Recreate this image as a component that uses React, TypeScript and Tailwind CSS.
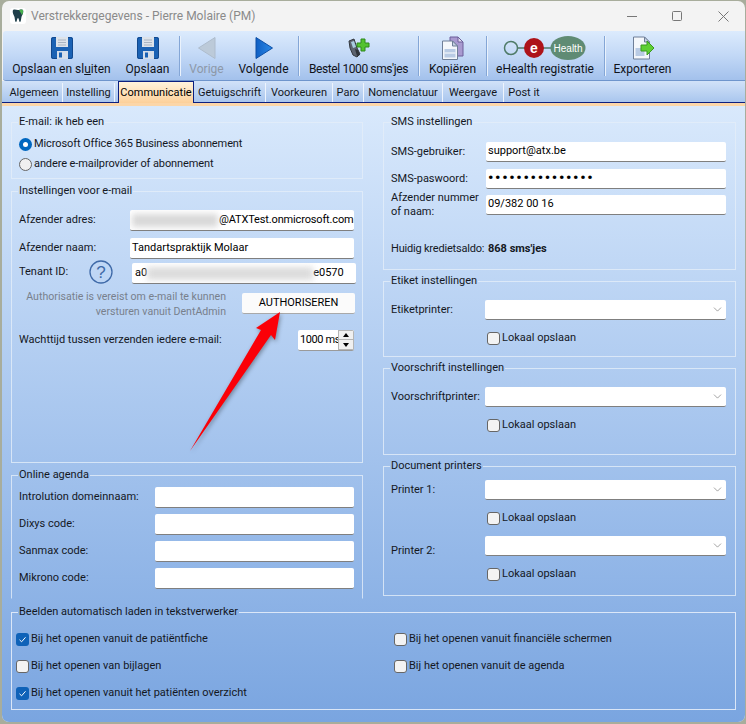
import React from 'react';
import { ChevronDown } from 'lucide-react';

function Floppy() {
  return (
    <svg width="22" height="22" viewBox="0 0 22 22">
      <rect x="0" y="0" width="22" height="22" rx="2" fill="#1b62b4" />
      <rect x="0.5" y="0.5" width="21" height="21" rx="2" fill="none" stroke="#12488c" />
      <rect x="5" y="0" width="12" height="10" fill="#dde3ea" />
      <path d="M7 3h8M7 5.5h8M7 8h8" stroke="#a9b4c2" strokeWidth="1" />
      <rect x="6" y="14" width="11" height="8" fill="#d5deea" />
      <rect x="8" y="15.5" width="3" height="5" fill="#1b62b4" />
    </svg>
  );
}

function ArrowLeftIcon() {
  return (
    <svg width="20" height="24" viewBox="0 0 20 24">
      <path d="M18 1.5V22.5L1.5 12Z" fill="#bccad9" stroke="#aebccc" strokeLinejoin="round" />
    </svg>
  );
}

function ArrowRightIcon() {
  return (
    <svg width="20" height="24" viewBox="0 0 20 24">
      <defs>
        <linearGradient id="nx" x1="0" y1="0" x2="1" y2="0">
          <stop offset="0" stopColor="#0f5fc4" />
          <stop offset="1" stopColor="#2b8ae8" />
        </linearGradient>
      </defs>
      <path d="M2 1.5V22.5L18.5 12Z" fill="url(#nx)" stroke="#0d4fa6" strokeLinejoin="round" />
    </svg>
  );
}

function PhoneIcon() {
  return (
    <svg width="24" height="24" viewBox="0 0 24 24">
      <path d="M2 5l5-2 2 6 1 3 3 6-3 3-4-2-3-7Z" fill="#5d6470" stroke="#33383f" />
      <path d="M4 6l3-1 2 6-3 1Z" fill="#a9cbe0" />
      <path d="M8 13l3 1 2 5-3 1Z" fill="#2f3339" />
      <path d="M14 3h4v4h4v4h-4v4h-4v-4h-4V7h4Z" fill="#53c22f" stroke="#2f8a1c" />
    </svg>
  );
}

function CopyIcon() {
  return (
    <svg width="24" height="24" viewBox="0 0 24 24">
      <path d="M9 1h8l5 5v14H9Z" fill="#a99ad0" stroke="#6d5f9a" />
      <path d="M17 1v5h5Z" fill="#e3ddf0" stroke="#6d5f9a" />
      <path d="M1.5 5h10l5 5v13.500h-15Z" fill="#f4f7fb" stroke="#6f7f98" />
      <path d="M11.500 5v5h5Z" fill="#c7d2e3" stroke="#6f7f98" />
      <rect x="3.500" y="13" width="11" height="8.500" fill="#b9cbe4" />
      <path d="M3.500 17h11" stroke="#fff" />
    </svg>
  );
}

function EHealthIcon() {
  return (
    <svg width="84" height="26" viewBox="0 0 84 26">
      <path d="M14 13h10M40 13h10" stroke="#4f7b68" strokeWidth="1.500" />
      <circle cx="8" cy="13" r="6.500" fill="none" stroke="#4f7b68" strokeWidth="1.500" />
      <circle cx="31" cy="13" r="10" fill="#ad1319" />
      <text x="31" y="17.500" fontSize="14" fontWeight="700" fill="#fff" textAnchor="middle" fontFamily="Liberation Sans, sans-serif">e</text>
      <ellipse cx="65" cy="13" rx="17.500" ry="12" fill="#5f8b74" />
      <text x="65" y="16.500" fontSize="10" fill="#fff" textAnchor="middle" fontFamily="Liberation Sans, sans-serif">Health</text>
    </svg>
  );
}

function ExportIcon() {
  return (
    <svg width="22" height="24" viewBox="0 0 22 24">
      <path d="M1.500 1h11l5 5v17h-16Z" fill="#f4f7fb" stroke="#6f7f98" />
      <path d="M12.500 1v5h5Z" fill="#c7d2e3" stroke="#6f7f98" />
      <rect x="3.500" y="12" width="9" height="8" fill="#b9cbe4" />
      <path d="M9 9h6V5l7 7-7 7v-4H9Z" fill="#5fcf34" stroke="#3a9a1e" />
    </svg>
  );
}

function ToolSep({ className }: { className: string }) {
  return <div className={`h-[40px] w-[2px] shrink-0 border-l border-[#84a6d6] bg-[#eaf2fc] ${className}`} />;
}

function ToolButton({ className, icon, disabled, children }: { className: string; icon: React.ReactNode; disabled?: boolean; children: React.ReactNode }) {
  return (
    <div className={`flex shrink-0 flex-col items-center ${className}`}>
      <div className="flex h-[24px] items-center justify-center">{icon}</div>
      <div className={`mt-[1px] whitespace-nowrap text-[12px] leading-[16px] ${disabled ? 'text-[#8d98a8]' : 'text-[#10131a]'}`}>{children}</div>
    </div>
  );
}

const tabs = [
  { label: 'Algemeen', w: 'w-[57px]' },
  { label: 'Instelling', w: 'w-[52px]' },
  { label: 'Communicatie', w: 'w-[76px] ml-[3px]', active: true },
  { label: 'Getuigschrift', w: 'w-[72px]' },
  { label: 'Voorkeuren', w: 'w-[67px]' },
  { label: 'Paro', w: 'w-[31px]' },
  { label: 'Nomenclatuur', w: 'w-[79px]' },
  { label: 'Weergave', w: 'w-[61px]' },
  { label: 'Post it', w: 'w-[40px]' },
];

function Group({ title, className, children }: { title: string; className: string; children: React.ReactNode }) {
  return (
    <fieldset className={`min-w-0 border border-[#e4edf9]/80 px-[7px] ${className}`}>
      <legend className="-ml-[1px] h-[16px] px-[1px] leading-[16px]">{title}</legend>
      {children}
    </fieldset>
  );
}

function TextBox({ className, children }: { className: string; children?: React.ReactNode }) {
  return (
    <div className={`flex shrink-0 items-center overflow-hidden whitespace-nowrap rounded-[2px] border-b border-[#7f7f7f] bg-white px-[2px] ${className}`}>
      {children}
    </div>
  );
}

function Combo() {
  return (
    <div className="flex h-[20px] w-[241px] shrink-0 items-center justify-end rounded-[2px] border-b border-[#7f7f7f] bg-white pr-[2px]">
      <ChevronDown size={13} strokeWidth={1} className="text-[#555]" />
    </div>
  );
}

function Check({ checked, label, className }: { checked?: boolean; label: string; className?: string }) {
  return (
    <div className={`flex h-[16px] items-center gap-[2px] whitespace-nowrap ${className ?? ''}`}>
      {checked ? (
        <div className="flex h-[13px] w-[13px] items-center justify-center rounded-[3px] bg-[#0f62b8]">
          <svg width="9" height="9" viewBox="0 0 9 9">
            <path d="M1.500 4.800 3.600 6.800 7.500 2.300" fill="none" stroke="#fff" strokeWidth="1" />
          </svg>
        </div>
      ) : (
        <div className="h-[13px] w-[13px] rounded-[3px] border border-[#666] bg-[#f3f3f3]" />
      )}
      <span>{label}</span>
    </div>
  );
}

function Radio({ checked, label }: { checked?: boolean; label: string }) {
  return (
    <div className="flex h-[20px] items-center gap-[2px]">
      {checked ? (
        <div className="flex h-[13px] w-[13px] items-center justify-center rounded-full bg-[#0067c0]">
          <div className="h-[5px] w-[5px] rounded-full bg-white" />
        </div>
      ) : (
        <div className="h-[13px] w-[13px] rounded-full border border-[#666] bg-[#f0f0f0]" />
      )}
      <span className="tracking-[-0.1px]">{label}</span>
    </div>
  );
}

function AgendaRow({ label, className }: { label: string; className?: string }) {
  return (
    <div className={`flex items-center ${className ?? ''}`}>
      <span className="w-[136px] shrink-0">{label}</span>
      <TextBox className="h-[21px] w-[199px]" />
    </div>
  );
}

function SmsRow({ label, className, children }: { label: React.ReactNode; className?: string; children?: React.ReactNode }) {
  return (
    <div className={`flex h-[20px] items-center ${className ?? ''}`}>
      <span className="w-[95px] shrink-0 leading-[14px]">{label}</span>
      <TextBox className="h-[20px] w-[240px] text-black">{children}</TextBox>
    </div>
  );
}

export default function App() {
  return (
    <div className="relative h-[724px] w-[746px] overflow-hidden bg-[#a8ad9c] font-['Roboto',sans-serif] text-[11px] text-[#14181f]">
      <div className="ml-[2px] mt-[1px] flex h-[721px] w-[743px] flex-col overflow-hidden rounded-[7px] bg-[#f3f3f3]">
        {/* title bar */}
        <div className="flex h-[30px] shrink-0 items-center">
          <div className="ml-[8px] flex h-[16px] w-[16px] items-center justify-center rounded-[3px] bg-white">
            <svg width="12" height="14" viewBox="0 0 12 14">
              <path d="M1 1c2-1 3 0 5 0s3-1 5 0c1 3-1 5-1.500 7S9 13 8 13 7 9 6 9s-1 4-2 4-1-3-1.500-5S0 4 1 1Z" fill="#1f3f4a" />
              <path d="M7 1c2-1 3-.5 4 0 .5 2-.5 4-1 5Z" fill="#49b050" />
            </svg>
          </div>
          <span className="ml-[5px] text-[12px] text-[#8a8a8a]">Verstrekkergegevens - Pierre Molaire (PM)</span>
          <div className="ml-auto flex items-center">
            <svg width="11" height="11" viewBox="0 0 11 11" className="mr-[34px]">
              <path d="M0 5.500h10" stroke="#777" />
            </svg>
            <svg width="11" height="11" viewBox="0 0 11 11" className="mr-[35px]">
              <rect x="0.500" y="0.500" width="9" height="9" rx="1" fill="none" stroke="#777" />
            </svg>
            <svg width="11" height="11" viewBox="0 0 11 11" className="mr-[16px]">
              <path d="M0.500 0.500l10 10M10.500 0.500l-10 10" stroke="#777" />
            </svg>
          </div>
        </div>

        {/* toolbar */}
        <div className="ml-[1px] flex h-[50px] shrink-0 items-start rounded-l-[3px] border-b border-[#6f95cc] bg-gradient-to-b from-[#dcebfd] via-[#c2d8f6] to-[#a3c1ec] pt-[5px]">
          <ToolButton className="ml-[10px] w-[97px]" icon={<Floppy />}>
            Opslaan en sl<u>u</u>iten
          </ToolButton>
          <ToolButton className="ml-[16px] w-[43px]" icon={<Floppy />}>Opslaan</ToolButton>
          <ToolSep className="ml-[10px]" />
          <ToolButton className="ml-[9px] w-[33px]" disabled icon={<ArrowLeftIcon />}>Vorige</ToolButton>
          <ToolButton className="ml-[16px] w-[49px]" icon={<ArrowRightIcon />}>Volgende</ToolButton>
          <ToolSep className="ml-[10px]" />
          <ToolButton className="ml-[9px] w-[99px]" icon={<PhoneIcon />}>
            <span className="tracking-[-0.4px]">Bestel 1000 sms'jes</span>
          </ToolButton>
          <ToolSep className="ml-[10px]" />
          <ToolButton className="ml-[9px] w-[47px]" icon={<CopyIcon />}>Kopiëren</ToolButton>
          <ToolSep className="ml-[10px]" />
          <ToolButton className="ml-[9px] w-[96px]" icon={<EHealthIcon />}>eHealth registratie</ToolButton>
          <ToolSep className="ml-[11px]" />
          <ToolButton className="ml-[8px] w-[57px]" icon={<ExportIcon />}>Exporteren</ToolButton>
        </div>

        {/* tabs */}
        <div className="flex h-[22px] shrink-0 items-end border-b border-[#0b1f80] bg-gradient-to-b from-[#d2e2f8] to-[#a9c6ee] pl-[4px]">
          {tabs.map((t) =>
            t.active ? (
              <div key={t.label} className={`${t.w} -mb-[1px] flex h-[22px] shrink-0 items-center justify-center border-x border-t border-[#0b1f80] bg-gradient-to-b from-[#fff3dc] to-[#fdd09a] pt-[1px] text-black`}>
                {t.label}
              </div>
            ) : (
              <div key={t.label} className={`${t.w} flex h-[19px] shrink-0 items-center justify-center border-r border-[#eef4fd] pt-[1px] last:border-r-0`}>
                {t.label}
              </div>
            )
          )}
        </div>
        <div className="h-[3px] shrink-0 bg-[#fcd6a8]" />

        {/* content */}
        <div className="relative flex-1 bg-gradient-to-b from-[#d9e9fc] to-[#7aa5e0] pt-[8px]">
          <div className="ml-[9px] flex h-[490px] gap-[20px]">
            <div className="flex w-[352px] flex-col gap-[4px]">
              <Group title="E-mail: ik heb een" className="h-[65px]">
                <div className="mt-[4px]">
                  <Radio checked label="Microsoft Office 365 Business abonnement" />
                  <Radio label="andere e-mailprovider of abonnement" />
                </div>
              </Group>
              <Group title="Instellingen voor e-mail" className="h-[280px]">
                <div className="mt-[11px] flex items-center">
                  <span className="w-[111px] shrink-0">Afzender adres:</span>
                  <TextBox className="h-[21px] w-[224px]">
                    <div className="h-[13px] w-[86px] shrink-0 bg-[#d8d8d8] blur-[3px]" />
                    <span className="ml-[1px] text-black tracking-[-0.15px]">@ATXTest.onmicrosoft.com</span>
                  </TextBox>
                </div>
                <div className="mt-[7px] flex items-center">
                  <span className="w-[111px] shrink-0">Afzender naam:</span>
                  <TextBox className="h-[21px] w-[224px] text-black">Tandartspraktijk Molaar</TextBox>
                </div>
                <div className="mt-[1px] flex h-[24px] items-start">
                  <span className="mt-[4px] w-[70px] shrink-0">Tenant ID:</span>
                  <svg width="24" height="24" viewBox="0 0 24 24" className="shrink-0">
                    <circle cx="12" cy="12" r="11" fill="none" stroke="#3f6aa8" strokeWidth="1.300" />
                    <text x="12" y="18" fontSize="17" fill="#3f6aa8" textAnchor="middle" fontFamily="Liberation Sans, sans-serif">?</text>
                  </svg>
                  <TextBox className="ml-[19px] mt-[3px] h-[21px] w-[224px] text-black">
                    <span className="ml-[1px]">a0</span>
                    <div className="h-[13px] w-[166px] shrink-0 bg-[#dcdcdc] blur-[3px]" />
                    <span>e0570</span>
                  </TextBox>
                </div>
                <div className="mt-[9px] flex h-[21px] items-start">
                  <div className="mt-[-4px] w-[207px] shrink-0 whitespace-nowrap text-right text-[10.6px] leading-[15px] text-[#78808c]">
                    Authorisatie is vereist om e-mail te kunnen
                    <br />
                    versturen vanuit DentAdmin
                  </div>
                  <div className="ml-[16px] flex h-[21px] w-[113px] shrink-0 items-center justify-center rounded-[2px] border-b border-[#a9a9a9] bg-[#fbfbfb] text-black">
                    AUTHORISEREN
                  </div>
                </div>
                <div className="mt-[16px] flex items-center">
                  <span className="w-[279px] shrink-0">Wachttijd tussen verzenden iedere e-mail:</span>
                  <div className="flex h-[21px] w-[56px] shrink-0 overflow-hidden rounded-[2px] border-b border-[#9a9a9a] bg-white">
                    <span className="w-[40px] shrink-0 whitespace-nowrap pl-[2px] leading-[20px] tracking-[-0.4px] text-black">1000 ms</span>
                    <div className="flex w-[16px] shrink-0 flex-col">
                      <div className="flex h-[10px] items-center justify-center border border-[#b5b5b5] bg-[#f0f0f0]">
                        <div className="h-0 w-0 border-x-[3px] border-b-[4px] border-x-transparent border-b-black" />
                      </div>
                      <div className="flex h-[10px] items-center justify-center border border-t-0 border-[#b5b5b5] bg-[#f0f0f0]">
                        <div className="h-0 w-0 border-x-[3px] border-t-[4px] border-x-transparent border-t-black" />
                      </div>
                    </div>
                  </div>
                </div>
              </Group>
              <Group title="Online agenda" className="h-[132px] !border-b-transparent">
                <AgendaRow label="Introlution domeinnaam:" className="mt-[4px]" />
                <AgendaRow label="Dixys code:" className="mt-[6px]" />
                <AgendaRow label="Sanmax code:" className="mt-[6px]" />
                <AgendaRow label="Mikrono code:" className="mt-[6px]" />
              </Group>
            </div>

            <div className="flex w-[353px] flex-col gap-[3px]">
              <Group title="SMS instellingen" className="h-[156px]">
                <SmsRow label="SMS-gebruiker:" className="mt-[12px]">support@atx.be</SmsRow>
                <SmsRow label="SMS-paswoord:" className="mt-[7px]">
                  <span className="text-[15px] font-bold tracking-[1.700px]">•••••••••••••••</span>
                </SmsRow>
                <SmsRow label={<>Afzender nummer<br />of naam:</>} className="mt-[6px]">09/382 00 16</SmsRow>
                <div className="mt-[24px] flex h-[20px] items-center">
                  <span className="w-[97px] shrink-0 whitespace-nowrap tracking-[-0.2px]">Huidig kredietsaldo:</span>
                  <b className="font-bold">868 sms'jes</b>
                </div>
              </Group>
              <Group title="Etiket instellingen" className="h-[84px]">
                <div className="mt-[11px] flex items-center">
                  <span className="w-[94px] shrink-0">Etiketprinter:</span>
                  <Combo />
                </div>
                <Check label="Lokaal opslaan" className="ml-[96px] mt-[10px]" />
              </Group>
              <Group title="Voorschrift instellingen" className="h-[95px]">
                <div className="mt-[11px] flex items-center">
                  <span className="w-[94px] shrink-0 whitespace-nowrap">Voorschriftprinter:</span>
                  <Combo />
                </div>
                <Check label="Lokaal opslaan" className="ml-[96px] mt-[10px]" />
              </Group>
              <Group title="Document printers" className="h-[138px]">
                <div className="mt-[6px] flex items-center">
                  <span className="w-[94px] shrink-0">Printer 1:</span>
                  <Combo />
                </div>
                <Check label="Lokaal opslaan" className="ml-[96px] mt-[10px]" />
                <div className="mt-[10px] flex h-[20px] items-center">
                  <span className="w-[94px] shrink-0 pt-[10px]">Printer 2:</span>
                  <Combo />
                </div>
                <Check label="Lokaal opslaan" className="ml-[96px] mt-[10px]" />
              </Group>
            </div>
          </div>

          <div className="ml-[9px] w-[725px]">
            <fieldset className="h-[106px] min-w-0 border border-[#e4edf9]/90 px-[4px]">
              <legend className="ml-[2px] h-[16px] px-[1px] leading-[16px]">Beelden automatisch laden in tekstverwerker</legend>
              <div className="mt-[11px] grid grid-cols-[378px_1fr] gap-y-[11px]">
                <Check checked label="Bij het openen vanuit de patiëntfiche" />
                <Check label="Bij het openen vanuit financiële schermen" />
                <Check label="Bij het openen van bijlagen" />
                <Check label="Bij het openen vanuit de agenda" />
                <Check checked label="Bij het openen vanuit het patiënten overzicht" />
              </div>
            </fieldset>
          </div>
        </div>
      </div>

      {/* red annotation arrow */}
      <svg width="746" height="724" viewBox="0 0 746 724" className="pointer-events-none absolute left-0 top-0">
        <path d="M280 312 275 340 271 335 190 451 261 330 256 328Z" fill="#fb0007" className="drop-shadow-[1px_2px_2px_rgba(0,0,0,0.35)]" />
      </svg>
    </div>
  );
}
